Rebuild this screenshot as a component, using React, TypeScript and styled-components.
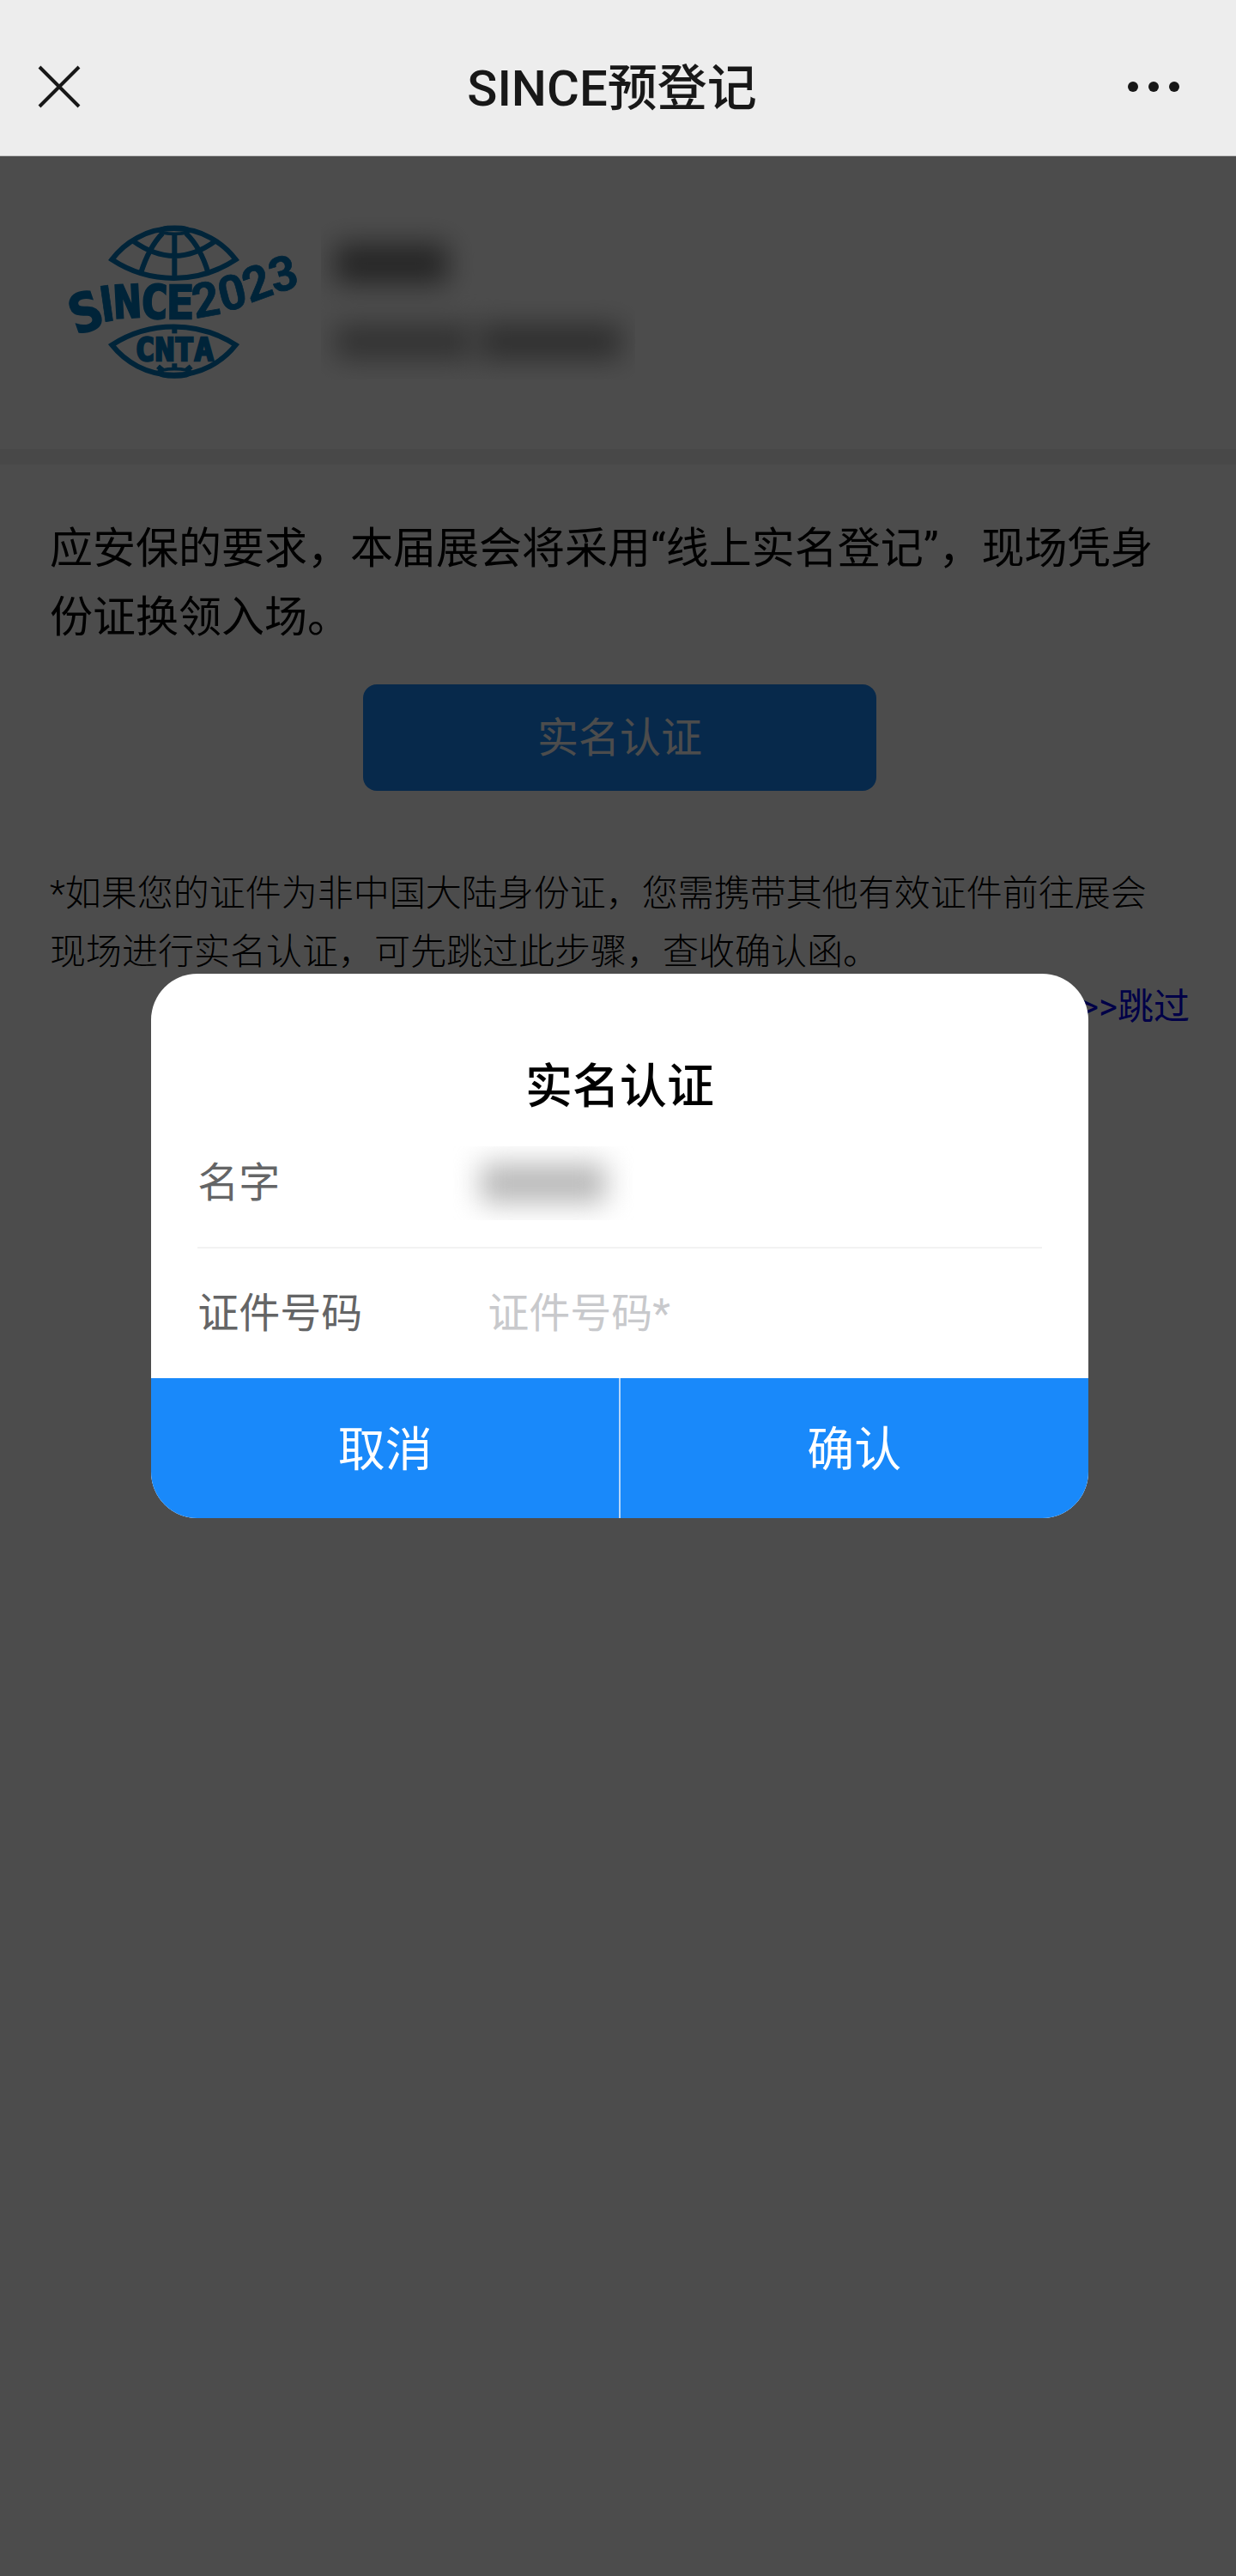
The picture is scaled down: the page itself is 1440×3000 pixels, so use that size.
import React from "react";
import styled, { createGlobalStyle } from "styled-components";

const fontStack = `Roboto, "Noto Sans CJK SC", sans-serif`;

const GlobalStyle = createGlobalStyle`
  *, *::before, *::after { box-sizing: border-box; }
  body {
    margin: 0;
    background: #fff;
    color: #000;
    font-family: ${fontStack};
  }
  button, input { font-family: inherit; }
  h1, h2, p { margin: 0; }
`;

const Page = styled.div`
  display: flex;
  flex-direction: column;
  min-height: 100vh;
`;

const TopBar = styled.header`
  display: grid;
  grid-template-columns: 1fr auto 1fr;
  align-items: center;
  height: 182px;
  padding: 20px 58px 0 44px;
  background: #ededed;
  border-bottom: 1px solid #c4c4c4;
`;

const PageTitle = styled.h1`
  padding-top: 4px;
  font-size: 58px;
  line-height: 80px;
  font-weight: 500;
  color: #181818;
`;

const IconButton = styled.button<{ $end?: boolean }>`
  display: flex;
  justify-self: ${(p) => (p.$end ? "end" : "start")};
  padding: 0;
  border: 0;
  background: none;
  color: #181818;
`;

const Stage = styled.div`
  position: relative;
  flex: 1;
`;

const Profile = styled.section`
  display: flex;
  align-items: flex-start;
  gap: 14px;
  height: 341px;
  padding: 58px 60px 0;
`;

const ProfileText = styled.div`
  display: flex;
  flex-direction: column;
  gap: 48px;
  padding: 44px 16px 24px;
  overflow: hidden;
`;

const RedactedLine = styled.div`
  display: flex;
  gap: 8px;
`;

const Redacted = styled.span<{ $width: number; $height: number; $tone: string }>`
  display: block;
  width: ${(p) => p.$width}px;
  height: ${(p) => p.$height}px;
  background: ${(p) => p.$tone};
  filter: blur(16px);
`;

const Band = styled.div`
  height: 18px;
  background: #f0f0f0;
`;

const Content = styled.main`
  display: flex;
  flex-direction: column;
  padding: 58px 54px 0 58px;
`;

const Lead = styled.p`
  padding-right: 30px;
  font-size: 50px;
  line-height: 80px;
`;

const VerifyButton = styled.button`
  align-self: center;
  width: 45%;
  height: 124px;
  margin: 38px 0 86px;
  padding: 0 0 8px;
  border: 0;
  border-radius: 16px;
  background: #1989fa;
  color: #fff;
  font-size: 48px;
`;

const Note = styled.p`
  padding-right: 30px;
  font-size: 42px;
  line-height: 68px;
  font-weight: 300;
`;

const SkipLink = styled.a`
  align-self: flex-end;
  font-size: 42px;
  line-height: 60px;
  color: #0000ee;
  text-decoration: none;
`;

const Overlay = styled.div`
  position: absolute;
  inset: 0;
  display: flex;
  justify-content: center;
  align-items: flex-start;
  padding: 952px 0 0 4px;
  background: rgba(0, 0, 0, 0.7);
`;

const Dialog = styled.form`
  width: 76%;
  padding-top: 93px;
  overflow: hidden;
  border-radius: 54px;
  background: #fff;
`;

const DialogTitle = styled.h2`
  font-size: 55px;
  line-height: 76px;
  font-weight: 500;
  text-align: center;
`;

const Field = styled.div<{ $divided?: boolean }>`
  display: flex;
  align-items: center;
  height: 151px;
  margin: 0 54px;
  border-bottom: ${(p) => (p.$divided ? "2px solid #f2f2f2" : "0")};
`;

const FieldLabel = styled.label`
  flex: 0 0 338px;
  font-size: 48px;
  line-height: 68px;
  color: #646566;
`;

const FieldInput = styled.input`
  flex: 1;
  min-width: 0;
  padding: 0;
  border: 0;
  outline: 0;
  background: none;
  font-size: 48px;
  line-height: 68px;
  &::placeholder { color: #c8c9cc; opacity: 1; }
`;

const HiddenName = styled.output`
  display: block;
  margin-left: -40px;
  padding: 20px 32px;
  overflow: hidden;
`;

const Actions = styled.div`
  display: grid;
  grid-template-columns: 1fr 1fr;
  gap: 2px;
  background: #b4d5f8;
`;

const ActionButton = styled.button`
  height: 163px;
  padding: 0 0 8px;
  border: 0;
  background: #1989fa;
  color: #fff;
  font-size: 55px;
`;

const LogoSvg = styled.svg`
  flex: none;
  width: 300px;
  height: 220px;
`;

const LogoLetter = styled.text<{ $block?: boolean }>`
  font-family: ${(p) => (p.$block ? `"DejaVu Sans Mono", monospace` : "Roboto, sans-serif")};
  font-weight: 700;
  text-anchor: middle;
  fill: #0078be;
  stroke: #0078be;
  stroke-width: ${(p) => (p.$block ? 7 : 2)};
`;

type Glyph = { char: string; x: number; y: number; turn: number; size: number; block: boolean };

// Baseline centre, tilt and size of every character on the curved wordmark.
const wordmark: Glyph[] = [
  { char: "S", x: 140, y: 432, turn: -19, size: 184, block: true },
  { char: "N", x: 268, y: 390, turn: -3, size: 158, block: true },
  { char: "C", x: 358, y: 392, turn: 2, size: 162, block: true },
  { char: "E", x: 450, y: 394, turn: 0, size: 160, block: true },
  { char: "2", x: 549, y: 385, turn: -10, size: 168, block: false },
  { char: "0", x: 645, y: 359, turn: -14, size: 168, block: false },
  { char: "2", x: 738, y: 323, turn: -20, size: 168, block: false },
  { char: "3", x: 826, y: 293, turn: -16, size: 168, block: false },
];

function Logo() {
  return (
    <LogoSvg viewBox="0 0 900 660" role="img" aria-label="SINCE2023 CNTA">
      <g fill="none" stroke="#0078be" strokeWidth="18">
        <path d="M211 187A270 270 0 0 1 644 187A393 393 0 0 1 211 187Z" />
        <path d="M430 95V257M388 95Q340 145 312 235M470 95Q522 145 548 235M285 122Q430 226 573 122" />
        <ellipse cx="430" cy="85" rx="52" ry="12" strokeWidth="11" />
        <path d="M211 485A400 400 0 0 1 644 485A275 275 0 0 1 211 485Z" />
        <path d="M430 420V445" />
        <ellipse cx="430" cy="583" rx="58" ry="14" strokeWidth="11" />
        <path d="M372 560L392 577M430 550V572M488 560L468 577" strokeWidth="18" />
      </g>
      <LogoLetter x="202" y="402" fontSize="176" strokeWidth="8" transform="rotate(-8 202 402)">
        I
      </LogoLetter>
      {wordmark.map((g, i) => (
        <LogoLetter
          key={i}
          $block={g.block}
          x={g.x}
          y={g.y}
          fontSize={g.size}
          transform={`rotate(${g.turn} ${g.x} ${g.y})`}
        >
          {g.char}
        </LogoLetter>
      ))}
      <LogoLetter x="430" y="539" fontSize="114" $block>
        CNTA
      </LogoLetter>
    </LogoSvg>
  );
}

export default function App() {
  return (
    <Page lang="zh-CN">
      <GlobalStyle />
      <TopBar>
        <IconButton type="button" aria-label="关闭">
          <svg width="50" height="50" viewBox="0 0 50 50" fill="none" stroke="currentColor" strokeWidth="4">
            <path d="M2 2L48 48M48 2L2 48" />
          </svg>
        </IconButton>
        <PageTitle>SINCE预登记</PageTitle>
        <IconButton type="button" aria-label="更多" $end>
          <svg width="76" height="50" viewBox="0 0 76 50" fill="currentColor">
            <circle cx="14" cy="25" r="6" />
            <circle cx="38" cy="25" r="6" />
            <circle cx="62" cy="25" r="6" />
          </svg>
        </IconButton>
      </TopBar>
      <Stage>
        <Profile>
          <Logo />
          <ProfileText>
            <RedactedLine>
              <Redacted $width={132} $height={46} $tone="#7c7c7c" />
            </RedactedLine>
            <RedactedLine>
              <Redacted $width={160} $height={40} $tone="#a6a6a6" />
              <Redacted $width={166} $height={40} $tone="#9a9a9a" />
            </RedactedLine>
          </ProfileText>
        </Profile>
        <Band />
        <Content>
          <Lead>应安保的要求，本届展会将采用“线上实名登记”，现场凭身份证换领入场。</Lead>
          <VerifyButton type="button">实名认证</VerifyButton>
          <Note>
            *如果您的证件为非中国大陆身份证，您需携带其他有效证件前往展会现场进行实名认证，可先跳过此步骤，查收确认函。
          </Note>
          <SkipLink href="#skip">&gt;&gt;跳过</SkipLink>
        </Content>
        <Overlay>
          <Dialog role="dialog" aria-labelledby="dialog-title" onSubmit={(e) => e.preventDefault()}>
            <DialogTitle id="dialog-title">实名认证</DialogTitle>
            <Field $divided>
              <FieldLabel htmlFor="name">名字</FieldLabel>
              <HiddenName id="name">
                <Redacted $width={146} $height={46} $tone="#b8b8b8" />
              </HiddenName>
            </Field>
            <Field>
              <FieldLabel htmlFor="id-number">证件号码</FieldLabel>
              <FieldInput id="id-number" placeholder="证件号码*" />
            </Field>
            <Actions>
              <ActionButton type="button">取消</ActionButton>
              <ActionButton type="submit">确认</ActionButton>
            </Actions>
          </Dialog>
        </Overlay>
      </Stage>
    </Page>
  );
}
